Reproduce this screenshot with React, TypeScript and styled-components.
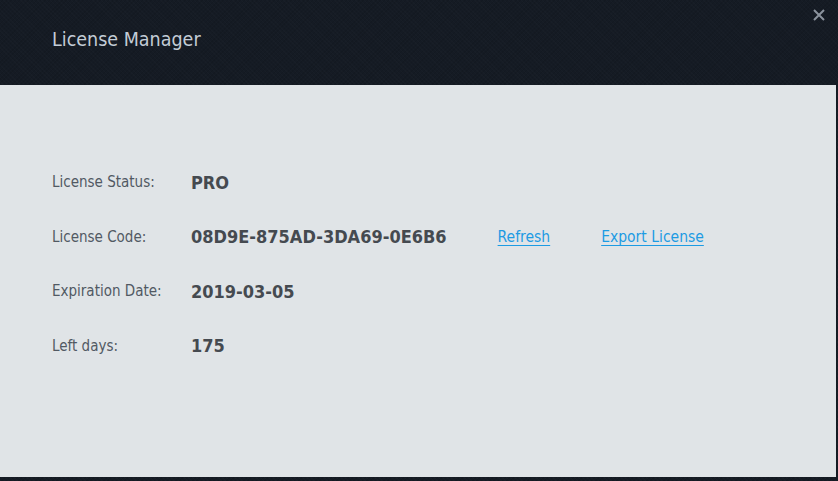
import React from 'react';
import styled, { createGlobalStyle } from 'styled-components';

const GlobalStyle = createGlobalStyle`
  html, body {
    margin: 0;
    padding: 0;
    background: #141a23;
  }
  body {
    font-family: "DejaVu Sans Condensed", "DejaVu Sans", "Liberation Sans", sans-serif;
  }
`;

const darkPattern = `
  background-color: #151b24;
  background-image:
    repeating-linear-gradient(45deg, rgba(255, 255, 255, 0.012) 0 1px, transparent 1px 3px),
    repeating-linear-gradient(-45deg, rgba(0, 0, 0, 0.08) 0 1px, transparent 1px 3px);
`;

const Window = styled.div`
  width: 838px;
  height: 481px;
  box-sizing: border-box;
  display: flex;
  flex-direction: column;
  padding: 0 2px 4px 0;
  ${darkPattern}
`;

const Header = styled.div`
  position: relative;
  height: 85px;
  flex-shrink: 0;
  display: flex;
  align-items: center;
  padding: 0 0 6px 52px;
  box-sizing: border-box;
`;

const Title = styled.h1`
  margin: 0;
  font-size: 19.5px;
  font-weight: normal;
  color: #c3ccd6;
`;

const CloseButton = styled.button`
  position: absolute;
  top: 7px;
  right: 9px;
  width: 16px;
  height: 16px;
  padding: 0;
  border: none;
  background: transparent;
  cursor: pointer;
  display: flex;
  align-items: center;
  justify-content: center;
`;

const Body = styled.div`
  flex: 1;
  background: #e0e4e7;
  padding: 70px 0 0 52px;
  display: flex;
  flex-direction: column;
`;

const Row = styled.div`
  display: flex;
  align-items: center;
  height: 54.5px;
`;

const Label = styled.div`
  width: 139px;
  flex-shrink: 0;
  font-size: 15px;
  color: #515963;
`;

const Value = styled.div`
  font-size: 18px;
  font-weight: bold;
  color: #454a50;
`;

const Actions = styled.div`
  display: flex;
  gap: 51px;
  margin-left: 51px;
`;

const ActionLink = styled.a`
  font-size: 15.5px;
  color: #1d9be3;
  text-decoration: underline;
  text-underline-offset: 3px;
  cursor: pointer;
`;

const rows = [
  { label: 'License Status:', value: 'PRO' },
  { label: 'License Code:', value: '08D9E-875AD-3DA69-0E6B6', actions: true },
  { label: 'Expiration Date:', value: '2019-03-05' },
  { label: 'Left days:', value: '175' },
];

const App: React.FC = () => {
  return (
    <>
      <GlobalStyle />
      <Window>
        <Header>
          <Title>License Manager</Title>
          <CloseButton aria-label="Close">
            <svg width="12" height="12" viewBox="0 0 12 12">
              <path d="M1 1 L11 11 M11 1 L1 11" stroke="#8b939d" strokeWidth="2" />
            </svg>
          </CloseButton>
        </Header>
        <Body>
          {rows.map((r) => (
            <Row key={r.label}>
              <Label>{r.label}</Label>
              <Value>{r.value}</Value>
              {r.actions && (
                <Actions>
                  <ActionLink>Refresh</ActionLink>
                  <ActionLink>Export License</ActionLink>
                </Actions>
              )}
            </Row>
          ))}
        </Body>
      </Window>
    </>
  );
};

export default App;
